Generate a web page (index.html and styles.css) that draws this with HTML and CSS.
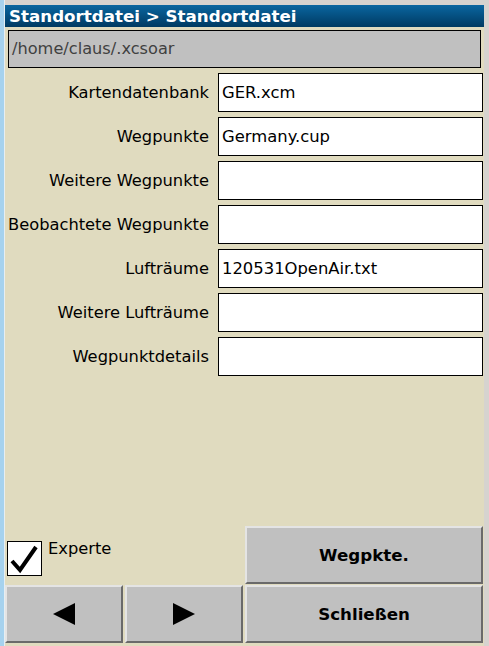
FILE: index.html
```html
<!DOCTYPE html>
<html>
<head>
<meta charset="utf-8">
<link rel="stylesheet" href="styles.css">
</head>
<body>
<div class="desk-strip"></div>
<div class="dialog">
  <div class="title">Standortdatei &gt; Standortdatei</div>
  <div class="path">/home/claus/.xcsoar</div>
  <div class="rows">
    <div class="row"><span class="label">Kartendatenbank</span><span class="field">GER.xcm</span></div>
    <div class="row"><span class="label">Wegpunkte</span><span class="field">Germany.cup</span></div>
    <div class="row"><span class="label">Weitere Wegpunkte</span><span class="field"></span></div>
    <div class="row"><span class="label">Beobachtete Wegpunkte</span><span class="field"></span></div>
    <div class="row"><span class="label">Lufträume</span><span class="field">120531OpenAir.txt</span></div>
    <div class="row"><span class="label">Weitere Lufträume</span><span class="field"></span></div>
    <div class="row"><span class="label">Wegpunktdetails</span><span class="field"></span></div>
  </div>
  <div class="spacer"></div>
  <div class="bottom">
    <div class="expert">
      <span class="check">
        <svg width="33" height="33" viewBox="0 0 33 33"><path d="M4 19 L12 28 L28 5" fill="none" stroke="#000" stroke-width="4" stroke-linejoin="miter"/></svg>
      </span>
      <span class="expert-label">Experte</span>
    </div>
    <div class="btn wide">Wegpkte.</div>
    <div class="btn"><svg width="22" height="22" viewBox="0 0 22 22"><path d="M0 11 L22 0 L22 22 Z" fill="#000"/></svg></div>
    <div class="btn"><svg width="22" height="22" viewBox="0 0 22 22"><path d="M22 11 L0 0 L0 22 Z" fill="#000"/></svg></div>
    <div class="btn wide">Schließen</div>
  </div>
</div>
</body>
</html>
```

FILE: styles.css
```css
html, body {
  margin: 0;
  padding: 0;
}
body {
  width: 489px;
  height: 646px;
  background: #d6d3cf;
  display: flex;
  font-family: "DejaVu Sans", sans-serif;
  overflow: hidden;
}
.desk-strip {
  width: 4px;
  height: 646px;
  background: #a6d2ee;
  border-right: 1px solid #e6eef2;
  flex: none;
}
.dialog {
  margin-top: 5px;
  width: 479px;
  height: 641px;
  background: #e0dbbf;
  display: flex;
  flex-direction: column;
  flex: none;
}
.title {
  height: 22px;
  line-height: 22px;
  background: linear-gradient(#0a66a0, #003a62);
  color: #fff;
  font-weight: bold;
  font-size: 16.7px;
  padding-left: 4px;
  white-space: nowrap;
}
.path {
  margin: 3px 3px 0 3px;
  height: 36px;
  border: 1px solid #000;
  background: #c0c0c0;
  color: #404040;
  font-size: 16.2px;
  line-height: 36px;
  padding-left: 3px;
}
.rows {
  margin-top: 5px;
  display: flex;
  flex-direction: column;
  gap: 5px;
}
.row {
  display: grid;
  grid-template-columns: 204px 265px;
  column-gap: 9px;
  height: 39px;
  align-items: center;
}
.label {
  text-align: right;
  font-size: 16.3px;
  color: #000;
  white-space: nowrap;
}
.field {
  height: 37px;
  border: 1px solid #000;
  background: #fff;
  font-size: 16.4px;
  line-height: 37px;
  padding-left: 3px;
  box-sizing: content-box;
  width: 260px;
}
.spacer {
  flex: 1;
}
.bottom {
  display: grid;
  grid-template-columns: 118px 118px 238px;
  grid-template-rows: 58px 58px;
  column-gap: 2px;
  row-gap: 1px;
  margin-bottom: 3px;
}
.expert {
  grid-column: 1 / 3;
  display: flex;
  align-items: center;
  padding-left: 2px;
  padding-top: 6px;
}
.check {
  width: 33px;
  height: 33px;
  border: 1px solid #000;
  background: #fff;
  display: block;
}
.check svg {
  display: block;
}
.expert-label {
  margin-left: 6px;
  font-size: 16.3px;
  align-self: flex-start;
  margin-top: 7px;
}
.btn {
  background: #c0c0c0;
  border-top: 2px solid #e4e4e4;
  border-left: 2px solid #e4e4e4;
  border-bottom: 2px solid #6a6a6a;
  border-right: 2px solid #6a6a6a;
  display: flex;
  align-items: center;
  justify-content: center;
  font-weight: bold;
  font-size: 16.7px;
  color: #000;
}
```
